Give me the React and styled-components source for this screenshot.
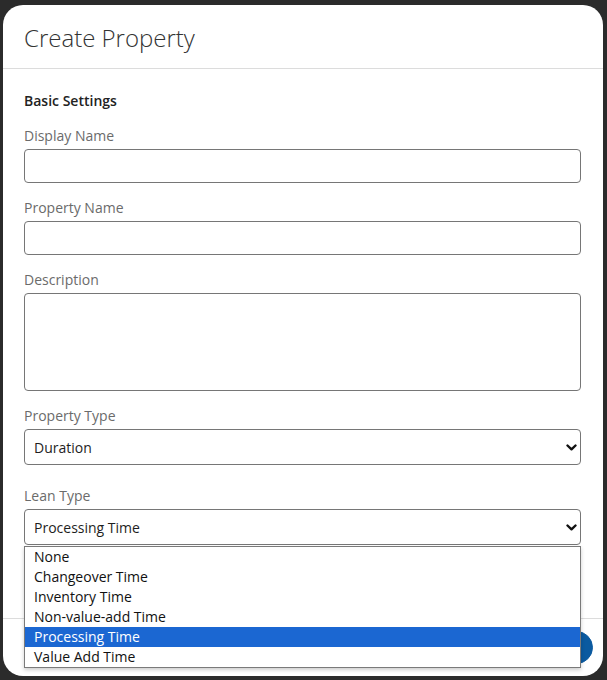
import { createGlobalStyle, styled } from 'styled-components';

const leanTypes = [
  'None',
  'Changeover Time',
  'Inventory Time',
  'Non-value-add Time',
  'Processing Time',
  'Value Add Time',
];

const GlobalStyle = createGlobalStyle`
  html, body {
    margin: 0;
    background-color: #2b2b2b;
  }
  body {
    font-family: "Open Sans", "Liberation Sans", sans-serif;
  }
`;

const Chevron = () => (
  <svg width='11' height='7' viewBox='0 0 11 7' aria-hidden='true'>
    <polyline
      points='1.5,1.5 5.5,5.3 9.5,1.5'
      fill='none'
      stroke='#111'
      strokeWidth='2.4'
      strokeLinecap='round'
      strokeLinejoin='round'
    />
  </svg>
);

const Field = ({ label, $gap, children }) => (
  <FieldGroup $gap={$gap}>
    <Label>{label}</Label>
    {children}
  </FieldGroup>
);

const SelectBox = ({ value, open }) => (
  <SelectWrap>
    <Select>
      <span>{value}</span>
      <Chevron />
    </Select>
    {open && (
      <OptionList>
        {leanTypes.map((item) => (
          <Option key={item} $active={item === value}>
            {item}
          </Option>
        ))}
      </OptionList>
    )}
  </SelectWrap>
);

const App = () => {
  return (
    <Page>
      <GlobalStyle />
      <Modal>
        <Header>
          <Title>Create Property</Title>
        </Header>
        <Body>
          <Section>Basic Settings</Section>
          <Field label='Display Name'>
            <Input />
          </Field>
          <Field label='Property Name'>
            <Input />
          </Field>
          <Field label='Description'>
            <TextArea />
          </Field>
          <Field label='Property Type'>
            <SelectBox value='Duration' />
          </Field>
          <Field label='Lean Type' $gap='21px'>
            <SelectBox value='Processing Time' open />
          </Field>
        </Body>
        <Footer>
          <Button $secondary>Cancel</Button>
          <Button>Create</Button>
        </Footer>
      </Modal>
    </Page>
  );
};

export default App;

const Page = styled.div`
  display: flex;
  min-height: 680px;
  box-sizing: border-box;
  padding: 5px 4px 4px 3px;
`;

const Modal = styled.div`
  background-color: #ffffff;
  border-radius: 20px;
  display: flex;
  flex-direction: column;
  width: 600px;
  height: 671px;
  box-sizing: border-box;
`;

const Header = styled.div`
  border-bottom: 1px solid #dcdcdc;
  padding: 17px 21px 14px;
`;

const Title = styled.h1`
  color: #333333;
  font-size: 24px;
  font-weight: 300;
  line-height: 32px;
  margin: 0;
`;

const Body = styled.div`
  display: flex;
  flex: 1;
  flex-direction: column;
  padding: 22px 22px 0 21px;
`;

const Section = styled.h2`
  color: #222222;
  font-size: 14px;
  font-weight: 600;
  line-height: 20px;
  margin: 0;
`;

const FieldGroup = styled.div`
  display: flex;
  flex-direction: column;
  gap: 3px;
  margin-top: ${({ $gap }) => $gap || '15px'};
`;

const Label = styled.label`
  color: #6b6b6b;
  font-size: 14px;
  line-height: 20px;
`;

const Input = styled.input`
  border: 1px solid #767676;
  border-radius: 4px;
  box-sizing: border-box;
  height: 34px;
  width: 100%;
`;

const TextArea = styled.textarea`
  border: 1px solid #767676;
  border-radius: 4px;
  box-sizing: border-box;
  height: 98px;
  resize: none;
  width: 100%;
`;

const SelectWrap = styled.div`
  position: relative;
`;

const Select = styled.div`
  align-items: center;
  border: 1px solid #767676;
  border-radius: 4px;
  box-sizing: border-box;
  color: #1e1e1e;
  display: flex;
  font-size: 14px;
  height: 36px;
  justify-content: space-between;
  padding: 0 3px 0 9px;

  svg {
    margin-top: 1px;
  }
`;

const OptionList = styled.ul`
  background-color: #ffffff;
  border: 1px solid #7a7a7a;
  box-shadow: 0 2px 4px rgba(0, 0, 0, 0.2);
  left: 0;
  list-style: none;
  margin: 0;
  padding: 0;
  position: absolute;
  right: 0;
  top: calc(100% + 1px);
  z-index: 10;
`;

const Option = styled.li`
  background-color: ${({ $active }) => ($active ? '#1b67d2' : 'transparent')};
  color: ${({ $active }) => ($active ? '#ffffff' : '#111111')};
  font-size: 14px;
  height: 20px;
  line-height: 20px;
  padding: 0 9px;
`;

const Footer = styled.div`
  align-items: center;
  border-top: 1px solid #dcdcdc;
  display: flex;
  gap: 10px;
  justify-content: flex-end;
  padding: 12px 10px 12px 21px;
`;

const Button = styled.button`
  background-color: ${({ $secondary }) => ($secondary ? '#ffffff' : '#0b5aa0')};
  border: 1px solid #0b5aa0;
  border-radius: 17px;
  color: ${({ $secondary }) => ($secondary ? '#0b5aa0' : '#ffffff')};
  font-family: inherit;
  font-size: 14px;
  height: 33px;
  padding: 0 22px;
`;
